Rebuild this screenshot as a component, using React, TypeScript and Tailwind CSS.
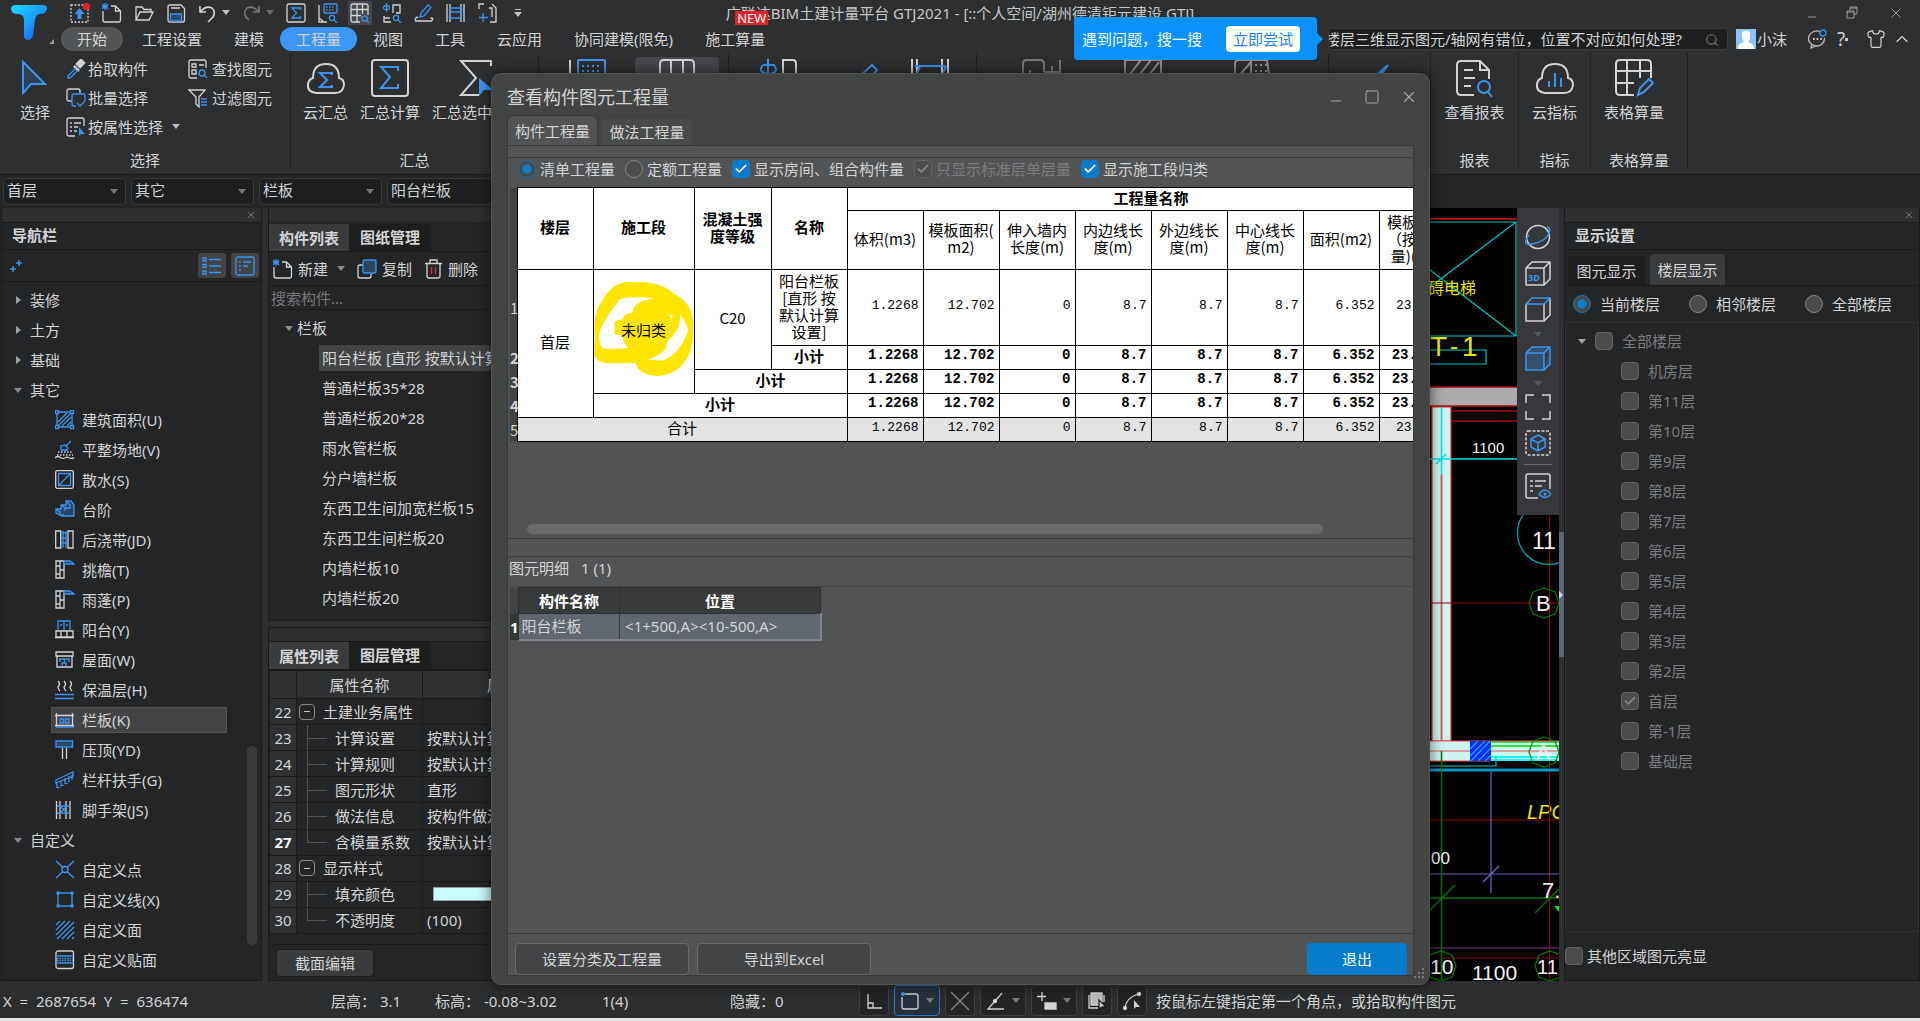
import {ReactNode} from "react";
import {Check, ChevronUp, Minus, Search, Shirt, Square, X} from "lucide-react";

const BLUE = "#3d93ee";
const GRAY = "#d2d3d4";

function Icon({children, className = "size-5", box = 20}: {children: ReactNode; className?: string; box?: number}) {
  return (
    <svg viewBox={`0 0 ${box} ${box}`} fill="none" stroke={GRAY} strokeWidth={box > 20 ? 2 : 1.3} className={`shrink-0 ${className}`} aria-hidden="true">
      {children}
    </svg>
  );
}

function Caret({className = "text-[#8b8c8e]"}: {className?: string}) {
  return (
    <svg viewBox="0 0 8 5" className={`h-[5px] w-2 shrink-0 ${className}`} aria-hidden="true">
      <path d="M0 0h8L4 5z" fill="currentColor"/>
    </svg>
  );
}

function SideCaret() {
  return (
    <svg viewBox="0 0 5 8" className="h-2 w-[5px] shrink-0 text-[#a0a1a3]" aria-hidden="true">
      <path d="M0 0v8l5-4z" fill="currentColor"/>
    </svg>
  );
}

/* ---------- icons ---------- */

const quickIcons = {
  upload: (
    <Icon>
      <rect x="1" y="2" width="17" height="17" strokeDasharray="2 1.5"/>
      <path d="M9.500 5l5 6h-3v5h-4v-5h-3z" fill={BLUE} stroke="none"/>
      <circle cx="16.500" cy="3.500" r="3.500" fill="#e5202a" stroke="none"/>
    </Icon>
  ),
  create: (
    <Icon>
      <path d="M1 8v9q0 2 2 2h14q1.500 0 1.500-2V8l-5-5H9M13.500 3v5h5"/>
      <path d="M0 1l6 5M6 1L0 6M3 0v7M0 3.500h6" stroke={BLUE}/>
    </Icon>
  ),
  open: (
    <Icon>
      <path d="M2 17V4h6l2 2.500h7V9M2 17h13l4-8H6z"/>
    </Icon>
  ),
  save: (
    <Icon>
      <path d="M2 4q0-2 2-2h11l3.500 3.500V17q0 2-2 2H4q-2 0-2-2zM5 5h9"/>
      <path d="M4.500 18v-7h11v7z" stroke={BLUE} fill="#2a4a6b"/>
    </Icon>
  ),
  undo: (
    <Icon>
      <path d="M2 3v6h6M2 9Q8 2 14 5q4 4 1 9l-5 5" strokeWidth="1.600"/>
    </Icon>
  ),
  redo: (
    <Icon>
      <path d="M17 3v6h-6M17 9Q11 2 5 5q-4 4-1 9l3 3" stroke="#77787a" strokeWidth="1.600"/>
    </Icon>
  ),
  sum: (
    <Icon>
      <rect x="1" y="1" width="18" height="18" rx="1.500"/>
      <path d="M14.500 7V5H6l4.500 5L6 15h8.500v-2" stroke={BLUE}/>
    </Icon>
  ),
  calc: (
    <Icon>
      <path d="M1 2v17h8M1 15l5 4"/>
      <rect x="6" y="1" width="13" height="9" rx="1" stroke={BLUE}/>
      <path d="M8 4h9M8 7h9" stroke={BLUE} strokeDasharray="1.500 1.500"/>
      <circle cx="14" cy="15" r="2.600" stroke={BLUE}/>
      <path d="M16 17l3 3" stroke={BLUE}/>
    </Icon>
  ),
  grid: (
    <Icon>
      <path d="M10 19H3q-2 0-2-2V3q0-2 2-2h13q2 0 2 2v9M1 6.500h17M1 12.500h10M7 1v18M12.500 1v10"/>
      <circle cx="14.500" cy="15.500" r="2.600" stroke={BLUE}/>
      <path d="M16.500 17.500l2.500 2.500" stroke={BLUE}/>
    </Icon>
  ),
  parts: (
    <Icon>
      <path d="M11 10V2h7v8h-4M2 13v6h7M2 15h6"/>
      <path d="M4.500 0v9M2 3h5q2 3-2.500 4Q0 6 2 3" stroke={BLUE}/>
      <circle cx="14" cy="15" r="2.600" stroke={BLUE}/>
      <path d="M16 17l3 3" stroke={BLUE}/>
    </Icon>
  ),
  pen: (
    <Icon>
      <path d="M4 14q-4 1-2.500 4h16q3-3-1-3"/>
      <path d="M6 14l1-4 7-8 3 2.500-7 8.500z" stroke={BLUE}/>
    </Icon>
  ),
  rebar: (
    <Icon>
      <path d="M1 1v18M4 1v18M15 1v18M18 1v18"/>
      <path d="M3 5h13M3 15h13M5 5l-2 10M16 5l-2 10M4 9h12" stroke={BLUE}/>
    </Icon>
  ),
  expand: (
    <Icon>
      <path d="M1 6V1h5M14 1l4 4v14h-6M11 5h3v9"/>
      <path d="M5 10v9M1 14.500h9" stroke={BLUE}/>
    </Icon>
  ),
};

const navIcons: Record<string, ReactNode> = {
  area: (
    <Icon>
      <path d="M2 2h15v15H2zM3 12L12 3M3 16L16 3M7 16l9-9M12 16l4-4" stroke={BLUE}/>
      <path d="M.5.500h3v3h-3zM15.500.500h3v3h-3zM.5 15.500h3v3h-3zM15.500 15.500h3v3h-3z" fill="#242527" stroke={BLUE}/>
    </Icon>
  ),
  ground: (
    <Icon>
      <path d="M6 5v5h7M7 6l3-1 3 3-2 3M11 6l5-5" stroke={BLUE}/>
      <path d="M3 12h14M2 15h16" strokeDasharray="1.500 1.500"/>
      <path d="M0 18q3-3 6 0 3 1 6-1 3 2 7 1"/>
    </Icon>
  ),
  apron: (
    <Icon>
      <rect x=".7" y=".7" width="17.600" height="17.600" rx="1.500"/>
      <path d="M3.500 3.500h12v12h-12zM3.500 15.500l12-12" stroke={BLUE}/>
    </Icon>
  ),
  stairs: (
    <Icon>
      <path d="M1 9h5V5h5V1h5l3 4v11H7l-6-3z" fill="#274766" stroke={BLUE}/>
      <path d="M1 9l4 3v3h4M6 5l4 3v3M11 1l4 4v3h-5" stroke={BLUE}/>
    </Icon>
  ),
  strip: (
    <Icon>
      <path d="M.7 1h5v17h-5zM13 1h5v17h-5z"/>
      <path d="M6 3h7M6 8h7M6 13h7M8 1v17M11 1v17" stroke={BLUE}/>
    </Icon>
  ),
  eave: (
    <Icon>
      <path d="M1 1h8v17H1zM5 1v17M1 6h4M5 10h4M1 14h4"/>
      <path d="M9 1h6l4 3H9z" fill="#274766" stroke={BLUE}/>
    </Icon>
  ),
  balcony: (
    <Icon>
      <path d="M3 10V1h12v9M9 1v9M5 6l2-2M11 6l2-2" stroke={BLUE}/>
      <path d="M1 11h17v6H1zM6 11v6M12 11v6M0 17.500h19"/>
    </Icon>
  ),
  roof: (
    <Icon>
      <path d="M1 2h17v4H1zM2 6v11h15V6"/>
      <path d="M4 9h11M5 9v3M9.500 9v3M14 9v3M7 16v-3h4v3" stroke={BLUE}/>
    </Icon>
  ),
  heat: (
    <Icon>
      <path d="M3 1q3 3 0 6 0 2 2 4M9 1q3 3 0 6 0 2 2 4M15 1q3 3 0 6 0 2 2 4"/>
      <path d="M0 14.500h19M0 18.500h19" stroke={BLUE}/>
    </Icon>
  ),
  parapet: (
    <Icon>
      <path d="M1.500 3v14M17.500 3v14M0 5.500h19M0 15.500h19"/>
      <path d="M5 9h3.500v4H5zM10.500 9H14v4h-3.500zM1 17h18" stroke={BLUE}/>
    </Icon>
  ),
  coping: (
    <Icon>
      <path d="M7.500 8v11M11.500 8v11"/>
      <path d="M1 1h16.500v6H1z" fill="#274766" stroke={BLUE}/>
    </Icon>
  ),
  rail: (
    <Icon>
      <path d="M1 10l17-8v4L1 13zM2 12v6M6 10v6M10 8v6M14 6v6M17 5v5M2 18l3-1M6 16l3-1M10 14l3-1" stroke={BLUE}/>
    </Icon>
  ),
  scaffold: (
    <Icon>
      <path d="M1.500 1v18M5 1v18M11 1v18M15 1v18"/>
      <path d="M2 6h13M2 13h13M5 13l7-7M5 6l7 7" stroke={BLUE}/>
    </Icon>
  ),
  point: (
    <Icon>
      <circle cx="10" cy="9.500" r="3" stroke={BLUE}/>
      <path d="M1 1l7 6.500M19 1l-7 6.500M1 18l7-6.500M19 18l-7-6.500" stroke={BLUE}/>
    </Icon>
  ),
  line: (
    <Icon>
      <path d="M3 3h14v13H3z" stroke={BLUE}/>
      <path d="M1.500 1.500h3v3h-3zM15.500 1.500h3v3h-3zM1.500 14.500h3v3h-3zM15.500 14.500h3v3h-3z" fill={BLUE} stroke="none"/>
    </Icon>
  ),
  face: (
    <Icon>
      <path d="M1 5l4-4M1 10l9-9M1 15L15 1M2 19L19 2M7 19L19 7M12 19l7-7M17 19l2-2" stroke={BLUE}/>
    </Icon>
  ),
  veneer: (
    <Icon>
      <rect x="1" y="1" width="17.500" height="17.500" rx="2"/>
      <path d="M1 6h17.500M1 13h17.500" stroke={BLUE}/>
      <path d="M2 8.500h16M2 10.500h16" stroke={BLUE} strokeDasharray="1.500 1"/>
    </Icon>
  ),
};

/* ---------- data ---------- */

const menuTabs = ["工程设置", "建模", "工程量", "视图", "工具", "云应用", "协同建模(限免)", "施工算量"];

const navOther = [
  {icon: "area", name: "建筑面积(U)"},
  {icon: "ground", name: "平整场地(V)"},
  {icon: "apron", name: "散水(S)"},
  {icon: "stairs", name: "台阶"},
  {icon: "strip", name: "后浇带(JD)"},
  {icon: "eave", name: "挑檐(T)"},
  {icon: "eave", name: "雨蓬(P)"},
  {icon: "balcony", name: "阳台(Y)"},
  {icon: "roof", name: "屋面(W)"},
  {icon: "heat", name: "保温层(H)"},
  {icon: "parapet", name: "栏板(K)", selected: true},
  {icon: "coping", name: "压顶(YD)"},
  {icon: "rail", name: "栏杆扶手(G)"},
  {icon: "scaffold", name: "脚手架(JS)"},
];

const navCustom = [
  {icon: "point", name: "自定义点"},
  {icon: "line", name: "自定义线(X)"},
  {icon: "face", name: "自定义面"},
  {icon: "veneer", name: "自定义贴面"},
];

const components = [
  "阳台栏板 [直形 按默认计算设置]",
  "普通栏板35*28",
  "普通栏板20*28",
  "雨水管栏板",
  "分户墙栏板",
  "东西卫生间加宽栏板15",
  "东西卫生间栏板20",
  "内墙栏板10",
  "内墙栏板20",
];

const properties = [
  {no: 22, name: "土建业务属性", group: true},
  {no: 23, name: "计算设置", value: "按默认计算设置"},
  {no: 24, name: "计算规则", value: "按默认计算规则"},
  {no: 25, name: "图元形状", value: "直形"},
  {no: 26, name: "做法信息", value: "按构件做法"},
  {no: 27, name: "含模量系数", value: "按默认计算规则", bold: true, last: true},
  {no: 28, name: "显示样式", group: true},
  {no: 29, name: "填充颜色", swatch: true},
  {no: 30, name: "不透明度", value: "(100)", last: true},
];

const floors = ["机房层", "第11层", "第10层", "第9层", "第8层", "第7层", "第6层", "第5层", "第4层", "第3层", "第2层", "首层", "第-1层", "基础层"];

const quantityHeads = ["体积(m3)", "模板面积(\nm2)", "伸入墙内\n长度(m)", "内边线长\n度(m)", "外边线长\n度(m)", "中心线长\n度(m)", "面积(m2)", "模板面积\n（按含模\n量)(m2)"];
const quantities = ["1.2268", "12.702", "0", "8.7", "8.7", "8.7", "6.352", "23.9512"];

/* ---------- form controls ---------- */

function CheckBox({label, checked, disabled, gap = "gap-1", tone = "dark"}: {label: string; checked?: boolean; disabled?: boolean; gap?: string; tone?: "dark" | "blue"}) {
  return (
    <label className={`flex items-center ${gap} ${disabled ? "text-[#7b7c7e]" : ""}`}>
      <span className="relative size-[18px]">
        <input
          type="checkbox"
          defaultChecked={checked}
          disabled={disabled}
          className={`block size-[18px] appearance-none rounded-sm border ${tone === "blue" ? "border-[#0a7acb] bg-[#0a7acb]" : "border-[#626365] bg-[#4b4c4e]"}`}
        />
        {checked && <Check strokeWidth={3} className={`pointer-events-none absolute inset-0.5 size-3.5 ${disabled ? "text-[#85868a]" : "text-white"}`}/>}
      </span>
      {label}
    </label>
  );
}

function Radio({label, name, checked, gap = "gap-1"}: {label: string; name: string; checked?: boolean; gap?: string}) {
  return (
    <label className={`flex items-center ${gap}`}>
      <input
        type="radio"
        name={name}
        defaultChecked={checked}
        className="size-[18px] appearance-none rounded-full border border-[#858688] bg-[#4b4c4e] checked:border-[#1b72b3] checked:bg-[radial-gradient(circle,#0a7fd2_0_4px,#48494b_5px)]"
      />
      {label}
    </label>
  );
}

/* ---------- header ---------- */

function TitleBar() {
  return (
    <div className="grid h-[25px] grid-cols-[1fr_auto_1fr] items-center">
      <div className="flex items-center gap-3 pl-[70px]">
        <button aria-label="上传">{quickIcons.upload}</button>
        <button aria-label="新建工程">{quickIcons.create}</button>
        <button aria-label="打开">{quickIcons.open}</button>
        <button aria-label="保存">{quickIcons.save}</button>
        <button aria-label="撤销" className="flex items-center gap-1">{quickIcons.undo}<Caret className="text-[#c0c1c2]"/></button>
        <button aria-label="恢复" className="flex items-center gap-1">{quickIcons.redo}<Caret className="text-[#6c6d6f]"/></button>
        <button aria-label="汇总计算">{quickIcons.sum}</button>
        <button aria-label="查看计算式">{quickIcons.calc}</button>
        <button aria-label="查看工程量" className="bg-[#46474a] ring-2 ring-[#46474a]">{quickIcons.grid}</button>
        <button aria-label="查看构件">{quickIcons.parts}</button>
        <button aria-label="编辑">{quickIcons.pen}</button>
        <button aria-label="钢筋">{quickIcons.rebar}</button>
        <button aria-label="扩展">{quickIcons.expand}</button>
        <button aria-label="更多" className="ml-1 flex flex-col items-center gap-0.5 text-[#c0c1c2]">
          <span className="h-px w-1.5 bg-current"/>
          <Caret className="text-[#c0c1c2]"/>
        </button>
      </div>
      <h1 className="text-[#c6c7c8]">广联达BIM土建计量平台 GTJ2021 - [::个人空间/湖州德清钜元建设.GTJ]</h1>
      <div className="flex items-center justify-end gap-7 pr-4 text-[#9a9b9d]">
        <button aria-label="最小化"><Minus className="mt-2 size-3"/></button>
        <button aria-label="还原">
          <svg viewBox="0 0 14 14" className="size-3.5" fill="none" stroke="currentColor"><path d="M4 4V1h7v7H8M1 5h7v7H1zM1 6h7M4 2h7"/></svg>
        </button>
        <button aria-label="关闭"><X className="size-4" strokeWidth={1.5}/></button>
      </div>
    </div>
  );
}

function MenuBar() {
  return (
    <div className="flex h-7 items-center pl-[61px]">
      <nav className="flex items-center">
        <button className="mr-[3px] h-6 rounded-full bg-[#535456] px-4">开始</button>
        {menuTabs.map((tab) => (
          <button key={tab} className={`relative h-6 px-4 ${tab === "工程量" ? "rounded-full bg-[#3c97f6]" : ""}`}>
            {tab}
            {tab === "施工算量" && (
              <span className="absolute -top-4 left-[46px] bg-[#e02128] px-0.5 text-[13px] leading-[14px] text-white">NEW</span>
            )}
          </button>
        ))}
      </nav>
      <div className="ml-auto flex items-center pr-2">
        <div className="relative h-[22px] w-[400px] rounded-sm border border-[#3a3b3d] bg-[#1d1e1f]">
          <input aria-label="搜索" defaultValue="楼层三维显示图元/轴网有错位，位置不对应如何处理?" className="block h-5 w-[370px] bg-transparent -indent-1 outline-none"/>
          <Search className="absolute top-1 right-2 size-3.5 text-[#6f7072]"/>
          <div className="absolute -top-3 right-full z-30 mr-3 flex h-[43px] w-[243px] items-center justify-between rounded bg-[#0b92ff] pr-[17px] pl-2 text-white">
            遇到问题，搜一搜
            <button className="h-[26px] rounded-sm bg-white px-[7px] text-[#1a7fe8]">立即尝试</button>
            <span className="absolute top-4 -right-1.5 border-y-[6px] border-l-[6px] border-y-transparent border-l-[#0b92ff]"/>
          </div>
        </div>
        <svg viewBox="0 0 20 20" className="ml-2 size-5 bg-[#8cc4f8]" aria-hidden="true">
          <path d="M6 3q4-3 8 0v6q-1 3-2 4 5 1 6 5v2H2v-2q1-4 6-5-1-1-2-4z" fill="#fff"/>
        </svg>
        <span className="ml-px">小沫</span>
        <button aria-label="消息" className="ml-5">
          <Icon>
            <path d="M17.500 9a8 7.500 0 1 1-4-6M5 15l-1 4 5-2" stroke="#bcbdbf"/>
            <path d="M6 10h9" strokeDasharray="1.600 2" strokeWidth="2"/>
            <circle cx="16" cy="4" r="3" stroke={BLUE}/>
          </Icon>
        </button>
        <button aria-label="帮助" className="ml-2.5 flex w-[18px] items-center text-[19px] leading-5">?<span className="size-[3px] bg-[#c6c7c8]"/></button>
        <button aria-label="皮肤" className="ml-[11px]"><Shirt className="size-5" strokeWidth={1.4}/></button>
        <button aria-label="收起" className="ml-1.5"><ChevronUp className="size-5" strokeWidth={1.4}/></button>
      </div>
    </div>
  );
}

function RibbonGroup({label, className, children}: {label?: string; className: string; children?: ReactNode}) {
  return (
    <div className={`flex h-[115px] flex-col border-r border-[#1f2022] ${className}`}>
      <div className="flex h-24 shrink-0">{children}</div>
      <div className="flex h-[22px] shrink-0 items-center justify-center">{label}</div>
    </div>
  );
}

function BigButton({label, className = "", children}: {label: string; className?: string; children: ReactNode}) {
  return (
    <button className={`flex flex-col items-center gap-1 pt-[5px] whitespace-nowrap ${className}`}>
      <Icon box={40} className="size-10">{children}</Icon>
      {label}
    </button>
  );
}

function SmallButton({label, gap = "gap-0.5", children}: {label: string; gap?: string; children: ReactNode}) {
  return (
    <button className={`flex h-[29px] items-center whitespace-nowrap ${gap}`}>
      {children}
      {label}
    </button>
  );
}

function ToolIcon({label, className, children}: {label: string; className: string; children: ReactNode}) {
  return (
    <button aria-label={label} className={`flex justify-center pt-[5px] ${className}`}>
      <Icon box={40} className="size-10">{children}</Icon>
    </button>
  );
}

function Ribbon() {
  return (
    <div className="flex h-[121px] items-start">
      <RibbonGroup label="选择" className="w-[291px]">
        <BigButton label="选择" className="w-[70px]">
          <path d="M8 4v31l8-9h14z" stroke={BLUE} fill="#2c4156"/>
        </BigButton>
        <div className="-ml-1 w-[124px] pt-px">
          <SmallButton label="拾取构件">
            <Icon>
              <path d="M8 7l5 5M11 5l4-4 3 3-4 4z" fill={GRAY} strokeWidth="2.500"/>
              <path d="M10 9l-8 8v2h2l8-8" stroke={BLUE}/>
            </Icon>
          </SmallButton>
          <SmallButton label="批量选择">
            <Icon>
              <path d="M6 13H3q-2 0-2-2V3q0-2 2-2h9q2 0 2 2v2"/>
              <path d="M10 18H8q-2 0-2-2V8q0-2 2-2h9q2 0 2 2v5M11 15l3 3 5-5" stroke={BLUE}/>
            </Icon>
          </SmallButton>
          <SmallButton label="按属性选择">
            <Icon>
              <path d="M9 19H3q-2 0-2-2V3q0-2 2-2h13q2 0 2 2v6M4 6h2M8 6h7M4 10h2M8 10h4M4 14h2M8 14h3"/>
              <path d="M13 10v9l2-2h4z" fill={BLUE} stroke="none"/>
            </Icon>
          </SmallButton>
        </div>
        <div className="-ml-0.5 pt-px">
          <SmallButton label="查找图元" gap="gap-1">
            <Icon>
              <path d="M9 19H3q-2 0-2-2V3q0-2 2-2h13q2 0 2 2v6M4 5h4v3H4zM4 11h4v4H4zM11 6h5"/>
              <circle cx="14" cy="14" r="3" stroke={BLUE}/>
              <path d="M16 16l3 3" stroke={BLUE}/>
            </Icon>
          </SmallButton>
          <SmallButton label="过滤图元" gap="gap-1">
            <Icon>
              <path d="M1 2h16l-6 7v10l-3-3V9z"/>
              <path d="M13 11h6M13 14h6M13 17h6" stroke={BLUE}/>
            </Icon>
          </SmallButton>
          <div className="-ml-4 flex h-[29px] items-center"><Caret className="text-[#c0c1c2]"/></div>
        </div>
      </RibbonGroup>
      <RibbonGroup label="汇总" className="w-[248px]">
        <BigButton label="云汇总" className="ml-3">
          <path d="M10 35q-9-1-8-9 1-5 5-6 0-14 13-14t13 14q5 1 5 7-1 8-9 8z"/>
          <path d="M26 17v-2H14l7 7-7 7h12v-2" stroke={BLUE}/>
        </BigButton>
        <BigButton label="汇总计算" className="ml-3">
          <rect x="2" y="2" width="36" height="36" rx="3"/>
          <path d="M28 13V9H11l9 10-9 11h17v-4" stroke={BLUE}/>
        </BigButton>
        <BigButton label="汇总选中图元" className="ml-3">
          <path d="M34 8V3H4l15 17L4 37h18"/>
          <path d="M22 20v18l5-6h9z" fill={BLUE} stroke="none"/>
        </BigButton>
      </RibbonGroup>
      <RibbonGroup className="w-[190px]">
        <ToolIcon label="查看计算式" className="w-24">
          <path d="M3 2v36h20"/>
          <rect x="11" y="2" width="27" height="20" rx="1" stroke={BLUE}/>
          <path d="M15 8h20M15 13h20" stroke={BLUE} strokeDasharray="2 3"/>
        </ToolIcon>
        <ToolIcon label="查看工程量" className="mt-1 w-[84px] rounded bg-[#45474a] pt-px">
          <path d="M3 38V6q0-4 4-4h26q4 0 4 4v20M3 17h34M14 2v36M26 2v24"/>
        </ToolIcon>
      </RibbonGroup>
      <RibbonGroup className="w-[248px]">
        <ToolIcon label="查看构件" className="w-[100px]">
          <path d="M24 30V2h10q3 0 3 4v24z"/>
          <path d="M9 1v30M4 7h11q6 8-6 9Q-2 14 4 7" stroke={BLUE}/>
        </ToolIcon>
        <ToolIcon label="编辑构件" className="w-[74px]">
          <path d="M12 24l2-6L26 7l5 5-11 13" stroke={BLUE}/>
        </ToolIcon>
        <ToolIcon label="查看钢筋" className="w-[54px]">
          <path d="M2 1v38M7 1v38M32 1v38M38 1v38"/>
          <path d="M5 8h30M10 8L5 20M36 8l-5 12" stroke={BLUE}/>
        </ToolIcon>
      </RibbonGroup>
      <RibbonGroup className="w-[352px]">
        <ToolIcon label="钢筋三维" className="w-[130px]">
          <path d="M1 30V6q0-4 4-4h13q4 0 4 4v8M8 20v-8M22 14h16M38 2v18M30 8v12" stroke="#77787a"/>
        </ToolIcon>
        <ToolIcon label="过滤" className="w-[72px]">
          <path d="M2 30V2h36v28M4 20L18 2M14 20L28 2M24 20L36 4" stroke="#8d8e90"/>
        </ToolIcon>
        <ToolIcon label="分类" className="w-[148px]">
          <path d="M2 30V6q0-4 4-4h28l4 28M4 20L18 4M18 2v20" stroke="#8d8e90"/>
          <path d="M22 7h12M22 13h12" stroke="#8d8e90" strokeDasharray="2 3"/>
        </ToolIcon>
      </RibbonGroup>
      <RibbonGroup className="w-[102px]">
        <ToolIcon label="检查" className="w-[118px]">
          <path d="M8 24L28 7 18 22z" stroke={BLUE} fill={BLUE}/>
        </ToolIcon>
      </RibbonGroup>
      <RibbonGroup label="报表" className="w-[88px]">
        <BigButton label="查看报表" className="w-[87px]">
          <path d="M19 37H6q-4 0-4-4V7q0-4 4-4h19l9 9v9M25 3v9h9M9 12h9M9 20h11M9 28h7"/>
          <circle cx="29" cy="29" r="6" stroke={BLUE}/>
          <path d="M33 34l4 5" stroke={BLUE}/>
        </BigButton>
      </RibbonGroup>
      <RibbonGroup label="指标" className="w-[72px]">
        <BigButton label="云指标" className="w-[71px]">
          <path d="M10 35q-9-1-8-9 1-5 5-6 0-14 13-14t13 14q5 1 5 7-1 8-9 8z"/>
          <path d="M14 29v-6M20 29V15M26 29v-9" stroke={BLUE}/>
        </BigButton>
      </RibbonGroup>
      <RibbonGroup label="表格算量" className="w-[97px]">
        <BigButton label="表格算量" className="w-[86px]">
          <path d="M20 37H6q-4 0-4-4V6q0-4 4-4h27q4 0 4 4v14M2 13h35M2 25h18M13 2v35M26 2v18"/>
          <path d="M24 37l2-7 9-9 4 4-9 9z" stroke={BLUE}/>
        </BigButton>
      </RibbonGroup>
    </div>
  );
}

function FilterBar() {
  return (
    <div className="flex h-[34px] items-center gap-[5px] border-t border-[#1b1c1d] bg-[#242527] pl-[3px]">
      {["首层", "其它", "栏板", "阳台栏板"].map((item) => (
        <div key={item} className="relative w-[123px]">
          <select aria-label={item} className="block h-[27px] w-full appearance-none rounded-sm border border-[#37383a] bg-[#1e1f20] pb-[3px] pl-[3px]">
            <option>{item}</option>
          </select>
          <span className="pointer-events-none absolute top-[11px] right-2 flex"><Caret className="text-[#77787a]"/></span>
        </div>
      ))}
    </div>
  );
}

/* ---------- left panels ---------- */

function PanelStrip() {
  return (
    <div className="flex h-3.5 shrink-0 items-center justify-end bg-[#2d2e30] pr-1">
      <button aria-label="关闭面板"><X className="size-3 text-[#8b8c8e]" strokeWidth={1.5}/></button>
    </div>
  );
}

function NavGroup({name, open}: {name: string; open?: boolean}) {
  return (
    <button className="flex h-[30px] items-center">
      <span className="flex w-7 justify-center pl-1">{open ? <Caret/> : <SideCaret/>}</span>
      {name}
    </button>
  );
}

function NavItem({icon, name, selected}: {icon: string; name: string; selected?: boolean}) {
  return (
    <button className={`my-0.5 ml-[49px] flex h-[26px] w-44 items-center gap-[7px] pl-[3px] ${selected ? "border border-[#505153] bg-[#434446]" : "border border-transparent"}`}>
      {navIcons[icon]}
      {name}
    </button>
  );
}

function NavPanel() {
  return (
    <aside className="ml-px flex w-[261px] shrink-0 flex-col border border-t-0 border-[#191a1b]">
      <PanelStrip/>
      <h2 className="flex h-7 shrink-0 items-center border-y border-[#191a1b] pb-0.5 pl-2.5 font-bold">导航栏</h2>
      <div className="flex h-8 shrink-0 items-center gap-[5px] border-b border-[#191a1b] pr-0.5 pl-2">
        <svg viewBox="0 0 12 14" className="mr-auto h-3.5 w-3" fill="none" stroke={BLUE} strokeWidth="1.500" aria-hidden="true"><path d="M9 1v6M6 4h6M3 7v6M0 10h6"/></svg>
        <button aria-label="列表视图" className="flex h-[25px] w-7 items-center justify-center rounded bg-[#434446]">
          <Icon><path d="M7 3.500h12M7 10h12M7 16.500h12M1 2h3v3H1zM1 8.500h3v3H1zM1 15h3v3H1z" stroke={BLUE}/></Icon>
        </button>
        <button aria-label="分组视图" className="flex h-[25px] w-7 items-center justify-center rounded bg-[#434446]">
          <Icon><rect x="1" y="1" width="18" height="18" rx="2" stroke={BLUE}/><path d="M4 6h2M8 6h8M4 10h2M8 10h5M4 14h2" stroke={BLUE}/></Icon>
        </button>
      </div>
      <div className="relative flex grow flex-col pt-[3px]">
        <NavGroup name="装修"/>
        <NavGroup name="土方"/>
        <NavGroup name="基础"/>
        <NavGroup name="其它" open/>
        {navOther.map((item) => <NavItem key={item.name} {...item}/>)}
        <NavGroup name="自定义" open/>
        {navCustom.map((item) => <NavItem key={item.name} {...item}/>)}
        <div className="absolute right-1 bottom-[35px] h-[199px] w-2.5 rounded-full bg-[#3b3c3e]"/>
      </div>
    </aside>
  );
}

function PanelTabs({tabs}: {tabs: string[]}) {
  return (
    <div className="flex h-7 shrink-0 border-b border-[#191a1b] font-bold">
      <button className="w-20 bg-[#3a3b3d]">{tabs[0]}</button>
      <button className="w-[82px] bg-[#1e1e1f] pb-0.5">{tabs[1]}</button>
    </div>
  );
}

function PropertyTable() {
  return (
    <table className="h-[264px] w-full table-fixed border-collapse text-left whitespace-nowrap">
      <thead className="bg-[#2f3032]">
        <tr className="h-7">
          <th className="w-[27px] border border-[#191a1b]"/>
          <th className="w-[126px] border border-[#191a1b] p-0 text-center font-normal">属性名称</th>
          <th className="border border-[#191a1b] p-0 text-center font-normal">属性值</th>
        </tr>
      </thead>
      <tbody>
        {properties.map((row) => (
          <tr key={row.no} className="h-[26px]">
            <td className={`border border-[#191a1b] bg-[#2f3032] p-0 text-center ${row.bold ? "font-bold text-white" : ""}`}>{row.no}</td>
            <td className="relative border border-[#191a1b] p-0">
              {row.group ? (
                <span className="flex items-center gap-2 pl-0.5">
                  <span className="flex size-4 items-center justify-center rounded-sm border border-[#8b8c8e]">
                    <span className="h-px w-1.5 bg-[#c6c7c8]"/>
                  </span>
                  {row.name}
                </span>
              ) : (
                <>
                  <span className={`absolute top-0 left-2.5 border-l border-[#4f5052] ${row.last ? "h-1/2" : "h-full"}`}/>
                  <span className="absolute top-1/2 left-2.5 w-5 border-t border-[#4f5052]"/>
                  <span className="pl-[38px]">{row.name}</span>
                </>
              )}
            </td>
            <td className="border border-[#191a1b] p-0 pl-1">
              {row.swatch ? <span className="ml-1.5 block h-3.5 w-28 border border-[#9a9b9d] bg-[#c8fbfa]"/> : row.value}
            </td>
          </tr>
        ))}
      </tbody>
    </table>
  );
}

function ComponentPanel() {
  return (
    <aside className="flex w-[330px] shrink-0 flex-col">
      <section className="flex h-[413px] shrink-0 flex-col overflow-hidden border border-t-0 border-[#191a1b] bg-[#242527]">
        <PanelStrip/>
        <div className="h-0.5"/>
        <PanelTabs tabs={["构件列表", "图纸管理"]}/>
        <div className="flex h-[34px] shrink-0 items-center border-b border-[#191a1b] pl-1 whitespace-nowrap">
          <button className="flex items-center gap-[5px]">{quickIcons.create}新建<span className="ml-1"><Caret/></span></button>
          <button className="ml-3 flex items-center gap-[5px]">
            <Icon>
              <path d="M6 6H3Q1 6 1 8v9q0 2 2 2h9q2 0 2-2v-2"/>
              <rect x="6" y="1" width="13" height="13" rx="1.500" stroke={BLUE} fill="#2c4660"/>
            </Icon>
            复制
          </button>
          <button className="ml-3 flex items-center gap-1">
            <Icon>
              <path d="M1 4.500h17M6 4V1h7v3M3 5v12q0 2 2 2h9q2 0 2-2V5"/>
              <path d="M7.500 8v7M11.500 8v7" stroke="#d0383e"/>
            </Icon>
            删除
          </button>
        </div>
        <input aria-label="搜索构件" placeholder="搜索构件..." className="h-6 shrink-0 border-b border-[#191a1b] px-0.5 outline-none placeholder:text-[#77787a]"/>
        <div className="flex flex-col pt-[3px]">
          <button className="flex h-[30px] items-center gap-1 pl-4"><Caret/>栏板</button>
          {components.map((name, i) => (
            <button key={name} className={`my-0.5 ml-[50px] h-[26px] pl-[3px] text-left whitespace-nowrap ${i === 0 ? "bg-[#434446]" : ""}`}>{name}</button>
          ))}
        </div>
      </section>
      <section className="mt-1.5 flex grow flex-col border border-[#191a1b] bg-[#242527]">
        <div className="h-3.5 shrink-0 border-b border-[#191a1b] bg-[#2d2e30]"/>
        <PanelTabs tabs={["属性列表", "图层管理"]}/>
        <PropertyTable/>
        <div className="mt-2.5 flex grow items-center border-t border-[#191a1b] pl-[7px]">
          <button className="h-7 w-[98px] rounded border border-[#1a1b1c] bg-[#3a3b3d]">截面编辑</button>
        </div>
      </section>
    </aside>
  );
}

/* ---------- drawing area ---------- */

function Drawing() {
  return (
    <svg viewBox="0 0 129 773" className="h-[773px] w-[129px] shrink-0" fill="none" strokeWidth="1.200" fontFamily="Liberation Sans, Noto Sans CJK SC, sans-serif">
      <path d="M0 11h88" stroke="#a80d0d" strokeWidth="2"/>
      <path d="M0 14h86v114H0M0 62l86 66M86 14L0 79M0 142h56v14H0" stroke="#00c8c8"/>
      <g fill="#e8e800">
        <text x="-18" y="86" fontSize="16">障碍电梯</text>
        <text x="0" y="148" fontSize="28">T</text>
        <text x="20" y="146" fontSize="24">-</text>
        <text x="32" y="148" fontSize="28">1</text>
        <text x="97" y="611" fontSize="20" fontStyle="italic">LPC</text>
      </g>
      <path d="M0 179h88v19H0z" fill="#ababab"/>
      <path d="M0 179h88M0 198h88M21 203h108M21 213h108" stroke="#a80d0d" strokeWidth="1.500"/>
      <path d="M2 199h19v334H2z" fill="#cdf3f1" stroke="#e03030"/>
      <path d="M11.500 267v276" stroke="#d86060" strokeWidth="2"/>
      <path d="M11.500 199v68M0 251h129M6 256l10-10" stroke="#00e0e0" strokeWidth="1.500"/>
      <path d="M1 395h128M119.500 307v466M0 612h129M13 750h116" stroke="#8a0a0a"/>
      <circle cx="119" cy="325" r="31.500" stroke="#00b4b4"/>
      <path d="M0 533h40v20H0z" fill="#cdf3f1"/>
      <path d="M61 533h68v20H61z" fill="#c8fbf4"/>
      <path d="M61 534h68M61 538h68" stroke="#30e040" strokeWidth="2"/>
      <path d="M61 549h68M61 552h68" stroke="#20f0f0" strokeWidth="2"/>
      <path d="M0 533h129M0 543h129M0 553h61" stroke="#e05050"/>
      <path d="M40 533h21v20H40z" fill="#0026ff"/>
      <path d="M40 541l8-8M40 548l15-15M41 553l19-20M48 553l13-13M55 553l6-6" stroke="#16b4f0"/>
      <path d="M0 558h66v-9" stroke="#00c8c8"/>
      <path d="M0 562h129" stroke="#0a96c8" strokeWidth="3"/>
      <path d="M61 563v122M0 666h129M53 674l16-16" stroke="#6a66c8"/>
      <path d="M0 740h129" stroke="#803c88"/>
      <path d="M11.500 543v230M0 690h129M0 702l25-25M105 705l24-24" stroke="#087008" strokeWidth="1.500"/>
      <path d="M124 698h5v6z" fill="#10e010"/>
      <g stroke="#0a7a0a">
        <path d="M103 384l11-4 11 4 4 11-4 11-11 4-11-4-4-11z"/>
        <path d="M103 533l11-4 11 4 4 11-4 11-11 4-11-4-4-11z"/>
        <path d="M0 747l11-4 11 4 4 11-4 11-11 4-11-4"/>
        <path d="M109 747l11-4 11 4M131 769l-11 4-11-4-4-11 4-11"/>
      </g>
      <g fill="#f2f2f2">
        <text x="42" y="245" fontSize="15">1100</text>
        <text x="102" y="341" fontSize="23">11</text>
        <text x="106" y="403" fontSize="22">B</text>
        <text x="106" y="552" fontSize="22">A</text>
        <text x="1" y="656" fontSize="17">00</text>
        <text x="112" y="690" fontSize="22">7.</text>
        <text x="0" y="766" fontSize="21">10</text>
        <text x="107" y="766" fontSize="20">11</text>
        <text x="42" y="772" fontSize="21">1100</text>
      </g>
    </svg>
  );
}

function ViewTools() {
  return (
    <div className="absolute top-0 right-0 flex h-[307px] w-[42px] flex-col items-center bg-[#37383b] pt-4">
      <button aria-label="动态观察">
        <Icon box={26} className="size-[26px]"><circle cx="13" cy="13" r="11.500" strokeWidth="1.500"/><path d="M22 3q5 1 1 8T7 20q-8 2-6-4 1-3 3-5" stroke={BLUE} strokeWidth="1.500"/></Icon>
      </button>
      <button aria-label="三维" className="mt-2.5">
        <Icon box={26} className="size-[26px]">
          <path d="M1 8h18v17H1zM1 8l6-6h18l-6 6M25 2v17l-6 6" strokeWidth="1.500" strokeLinejoin="round"/>
          <text x="3" y="21" fontSize="9" fontWeight="bold" fill={BLUE} stroke="none">3D</text>
        </Icon>
      </button>
      <button aria-label="俯视" className="mt-2.5">
        <Icon box={26} className="size-[26px]"><path d="M1 8v17h18V8M25 2v17l-6 6" strokeWidth="1.500"/><path d="M1 8l6-6h18l-6 6z" stroke={BLUE} strokeWidth="1.500"/></Icon>
      </button>
      <Caret className="mt-2.5 text-[#55586a]"/>
      <button aria-label="实体" className="mt-2">
        <Icon box={26} className="size-[26px]"><path d="M1 8h18v17H1zM1 8l6-6h18l-6 6M25 2v17l-6 6" fill="#34506e" stroke={BLUE} strokeWidth="1.500" strokeLinejoin="round"/></Icon>
      </button>
      <Caret className="mt-2.5 text-[#55586a]"/>
      <button aria-label="全屏" className="mt-2">
        <Icon box={26} className="size-[26px]"><path d="M1 9V1h8M17 1h8v8M25 17v8h-8M9 25H1v-8" strokeWidth="1.500"/></Icon>
      </button>
      <button aria-label="局部三维" className="mt-2.5">
        <Icon box={26} className="size-[26px]">
          <rect x="1" y="1" width="24" height="24" rx="2" strokeWidth="1.500" strokeDasharray="3 1.500"/>
          <path d="M13 5l7 4v8l-7 4-7-4V9zM6 9l7 4 7-4M13 13v8" stroke={BLUE} strokeWidth="1.500"/>
        </Icon>
      </button>
      <div className="mt-2 h-px w-7 bg-[#6a6b6d]"/>
      <button aria-label="显示设置" className="mt-2">
        <Icon box={26} className="size-[26px]">
          <path d="M13 25H3q-2 0-2-2V3q0-2 2-2h20q2 0 2 2v13M5 8h3M10 8h11M5 13h3M10 13h7M5 18h3" strokeWidth="1.500"/>
          <path d="M14 21q6-8 12 0-6 7-12 0z" stroke={BLUE} strokeWidth="1.500"/>
          <circle cx="20" cy="21" r="1.500" fill={BLUE} stroke="none"/>
        </Icon>
      </button>
    </div>
  );
}

function Canvas() {
  return (
    <div className="relative flex grow justify-end overflow-hidden bg-black">
      <Drawing/>
      <ViewTools/>
    </div>
  );
}

/* ---------- right panel ---------- */

function DisplayPanel() {
  return (
    <aside className="flex w-[356px] shrink-0 flex-col border border-t-0 border-[#191a1b] bg-[#242527]">
      <PanelStrip/>
      <h2 className="flex h-7 shrink-0 items-center border-y border-[#191a1b] pb-0.5 pl-2.5 font-bold">显示设置</h2>
      <div className="flex h-9 shrink-0 items-end gap-[5px] border-b border-[#191a1b] pl-[3px]">
        <button className="h-[29px] w-[77px] rounded-t bg-[#1e1e1f]">图元显示</button>
        <button className="h-[31px] w-[75px] rounded-t bg-[#3a3b3d]">楼层显示</button>
      </div>
      <div className="flex h-9 shrink-0 items-center gap-[29px] pl-2">
        <Radio name="floor" label="当前楼层" gap="gap-[9px]" checked/>
        <Radio name="floor" label="相邻楼层" gap="gap-[9px]"/>
        <Radio name="floor" label="全部楼层" gap="gap-[9px]"/>
      </div>
      <div className="flex grow flex-col border border-[#2f3032] pt-[3px]">
        <div className="flex h-[30px] items-center gap-[9px] pl-3">
          <Caret className="text-[#a0a1a3]"/>
          <CheckBox label="全部楼层" disabled gap="gap-[9px]"/>
        </div>
        {floors.map((floor) => (
          <div key={floor} className="flex h-[30px] items-center pl-[55px]">
            <CheckBox label={floor} disabled checked={floor === "首层"} gap="gap-[9px]"/>
          </div>
        ))}
      </div>
      <div className="flex h-12 shrink-0 items-center">
        <CheckBox label="其他区域图元亮显"/>
      </div>
    </aside>
  );
}

/* ---------- dialog ---------- */

function Scribble() {
  return (
    <svg viewBox="0 0 300 282" className="absolute top-3 left-0 h-[94px] w-[100px]" fillRule="evenodd" fill="#ffe500" aria-hidden="true">
      <path d="M95 0C60 5 40 30 25 55C5 85 0 110 2 150L0 215C5 235 20 243 50 244L125 243C130 265 150 280 190 282C230 282 265 255 275 235C295 205 300 170 298 120C296 90 285 60 245 38C215 15 190 3 150 1ZM180 50C150 44 95 44 78 52C60 75 15 130 15 168C15 188 22 202 45 202L102 198C90 185 86 172 86 160L62 158V118L85 112C92 94 105 94 115 92C118 65 150 50 180 50ZM258 97C270 115 282 135 282 146C272 180 245 222 205 236L162 233C190 222 214 208 216 195C214 175 240 165 252 138C258 120 260 108 258 97ZM226 98H236L234 110L228 106Z"/>
    </svg>
  );
}

function QuantityCells({bold, total}: {bold?: boolean; total?: boolean}) {
  return (
    <>
      {quantities.map((q, i) => (
        <td key={i} className={`border border-black pr-1 pb-1 text-right font-['Liberation_Mono',monospace] ${bold ? "text-[14px] font-bold" : "text-[13px]"} ${total ? "bg-[#e3e3e3]" : "bg-white"}`}>{q}</td>
      ))}
    </>
  );
}

function RowNo({no}: {no?: number}) {
  return <td className="bg-[#424345] p-0 leading-4 text-[#d2d3d4]">{no}</td>;
}

function QuantityTable() {
  const cell = "border border-black p-0 pb-1 bg-white";
  return (
    <table className="w-[945px] table-fixed border-collapse text-center font-['Noto_Sans_CJK_SC',sans-serif] leading-[17px] text-black">
      <colgroup>
        <col className="w-[7px]"/>
        <col className="w-[76px]"/>
        <col className="w-[101px]"/>
        <col className="w-[77px]"/>
        <col className="w-[76px]"/>
        {quantityHeads.map((h) => <col key={h} className="w-[76px]"/>)}
      </colgroup>
      <tbody>
        <tr className="h-[23px] font-bold">
          <RowNo/>
          <th rowSpan={2} className={cell}>楼层</th>
          <th rowSpan={2} className={cell}>施工段</th>
          <th rowSpan={2} className={cell}>混凝土强<br/>度等级</th>
          <th rowSpan={2} className={cell}>名称</th>
          <th colSpan={8} className={cell}>工程量名称</th>
        </tr>
        <tr className="h-[59px]">
          <RowNo/>
          {quantityHeads.map((h) => <th key={h} className={`${cell} font-normal whitespace-pre`}>{h}</th>)}
        </tr>
        <tr className="h-[76px]">
          <RowNo no={1}/>
          <td rowSpan={4} className={cell}>首层</td>
          <td rowSpan={3} className={`relative ${cell}`}>
            <Scribble/>
            <span className="relative">未归类</span>
          </td>
          <td rowSpan={2} className={cell}>C20</td>
          <td className={cell}>阳台栏板<br/>[直形 按<br/>默认计算<br/>设置]</td>
          <QuantityCells/>
        </tr>
        <tr className="h-6 font-bold">
          <RowNo no={2}/>
          <td className={cell}>小计</td>
          <QuantityCells bold/>
        </tr>
        <tr className="h-6 font-bold">
          <RowNo no={3}/>
          <td colSpan={2} className={cell}>小计</td>
          <QuantityCells bold/>
        </tr>
        <tr className="h-6 font-bold">
          <RowNo no={4}/>
          <td colSpan={3} className={cell}>小计</td>
          <QuantityCells bold/>
        </tr>
        <tr className="h-6">
          <RowNo no={5}/>
          <td colSpan={4} className="border border-black bg-[#e3e3e3] p-0 pb-1">合计</td>
          <QuantityCells total/>
        </tr>
      </tbody>
    </table>
  );
}

function DetailTable() {
  return (
    <table className="table-fixed border-collapse text-left whitespace-nowrap">
      <thead>
        <tr className="h-[26px] bg-[#393a3b] text-center font-bold text-white">
          <th className="w-2 bg-[#424345] p-0"/>
          <th className="w-[101px] border border-[#2f3031] p-0">构件名称</th>
          <th className="w-[201px] border border-[#2f3031] p-0">位置</th>
        </tr>
      </thead>
      <tbody>
        <tr className="h-[26px] bg-[#606770]">
          <td className="bg-[#353637] p-0 font-bold text-white">1</td>
          <td className="border-r border-b-2 border-r-[#3a3b3d] border-b-[#808285] p-0 pl-[3px]">阳台栏板</td>
          <td className="border-r-2 border-b-2 border-[#808285] p-0 pl-[5px]">&lt;1+500,A&gt;&lt;10-500,A&gt;</td>
        </tr>
      </tbody>
    </table>
  );
}

function QuantityDialog() {
  return (
    <div role="dialog" aria-label="查看构件图元工程量" className="absolute top-[73px] right-[490px] bottom-9 left-[491px] z-20 flex flex-col rounded-[10px] border border-[#505250] bg-[#434544] px-[15px] pb-2 shadow-[0_0_14px_rgba(0,0,0,0.6)]">
      <div className="flex h-[41px] shrink-0 items-center pt-1 text-[#d2d3d4]">
        <h2 className="text-[18px]">查看构件图元工程量</h2>
        <div className="-mr-1 ml-auto flex items-center gap-5 text-[#a5a6a7]">
          <button aria-label="最小化"><Minus className="mt-2 size-4" strokeWidth={1.5}/></button>
          <button aria-label="最大化"><Square className="size-4" strokeWidth={1.5}/></button>
          <button aria-label="关闭"><X className="size-[18px]" strokeWidth={1.5}/></button>
        </div>
      </div>
      <div className="flex h-[30px] shrink-0 items-end gap-1">
        <button className="h-[30px] w-[91px] rounded-t-md border border-b-0 border-[#38393a] bg-[#525355]">构件工程量</button>
        <button className="h-[26px] w-[90px] rounded-t bg-[#494b4b]">做法工程量</button>
      </div>
      <div className="flex min-h-0 grow flex-col border border-[#38393a] bg-[#525355] pt-[11px]">
        <div className="flex h-[382px] shrink-0 flex-col rounded-t border-y border-[#38393a]">
          <div className="flex h-[29px] shrink-0 items-center gap-2.5 pb-2 pl-2.5">
            <Radio name="kind" label="清单工程量" checked/>
            <Radio name="kind" label="定额工程量"/>
            <CheckBox label="显示房间、组合构件量" checked tone="blue"/>
            <CheckBox label="只显示标准层单层量" checked disabled/>
            <CheckBox label="显示施工段归类" checked tone="blue"/>
          </div>
          <div className="ml-0.5 overflow-hidden">
            <QuantityTable/>
          </div>
          <div className="mt-auto mr-[90px] mb-1 ml-[19px] h-2.5 rounded-full bg-[#68696b]"/>
        </div>
        <div className="mt-[17px] flex grow flex-col rounded-t border-y border-[#38393a]">
          <div className="flex h-[30px] shrink-0 items-center gap-3 border-b border-[#424345] pb-2 pl-px">
            <span>图元明细</span>
            <span>1 (1)</span>
          </div>
          <div className="flex grow items-start pl-0.5">
            <DetailTable/>
          </div>
        </div>
        <div className="flex h-[41px] shrink-0 items-end gap-2 pr-1.5 pl-[7px]">
          <button className="h-8 w-[174px] rounded border border-[#68696b] bg-[#444547]">设置分类及工程量</button>
          <button className="h-8 w-[174px] rounded border border-[#68696b] bg-[#444547]">导出到Excel</button>
          <button className="ml-auto h-8 w-[100px] rounded bg-[#057bcb] text-white">退出</button>
        </div>
      </div>
      <svg viewBox="0 0 12 12" className="absolute right-1 bottom-1 size-3" fill="#77797d" aria-hidden="true">
        <path d="M9 0h2v2H9zM5 4h2v2H5zM9 4h2v2H9zM1 8h2v2H1zM5 8h2v2H5zM9 8h2v2H9z"/>
      </svg>
    </div>
  );
}

/* ---------- status bar ---------- */

function SnapButton({label, width, active, menu, children}: {label: string; width: string; active?: boolean; menu?: boolean; children: ReactNode}) {
  return (
    <button aria-label={label} className={`flex h-[31px] items-center justify-center gap-1.5 rounded border ${width} ${active ? "border-[#2f74c0] bg-[#26303c]" : "border-[#3d3e40] bg-[#232425]"}`}>
      <Icon>{children}</Icon>
      {menu && <Caret className="text-[#77787a]"/>}
    </button>
  );
}

function StatusBar() {
  return (
    <footer className="flex h-[37px] shrink-0 items-center bg-[#2b2d2f] pt-0.5 whitespace-nowrap">
      <span className="w-[329px] pl-[3px] whitespace-pre">X  =  2687654  Y  =  636474</span>
      <span className="w-[106px] pl-0.5">层高： 3.1</span>
      <span className="w-[167px]">标高： -0.08~3.02</span>
      <span className="w-32">1(4)</span>
      <span className="w-[129px]">隐藏：0</span>
      <div className="flex items-center gap-[5px]">
        <SnapButton label="正交" width="w-[30px]"><path d="M4 3v14h14M4 12h5v5"/></SnapButton>
        <SnapButton label="捕捉" width="w-[46px]" active menu><path d="M5 3h11q2 0 2 2v11q0 2-2 2H4q-2 0-2-2V6"/><circle cx="3" cy="3" r="2" fill={BLUE} stroke="none"/></SnapButton>
        <SnapButton label="交点" width="w-[30px]"><path d="M1 1l18 18M19 1L1 19" stroke="#8b8c8e"/></SnapButton>
        <SnapButton label="角度" width="w-[46px]" menu><path d="M16 2L2 18h16"/><circle cx="9" cy="10" r="1.500" fill={GRAY}/></SnapButton>
        <SnapButton label="偏移" width="w-[46px]" menu><path d="M5 1v9M0 5.500h9"/><path d="M8 12h11v6H8z" fill={GRAY}/></SnapButton>
        <SnapButton label="图层" width="w-[30px]"><path d="M4 2h11v12H4z" fill="#b9babc"/><path d="M2 4v13h9M17 4v7"/><path d="M12 9v9l3-2h4z" fill={GRAY} stroke="#232425"/></SnapButton>
        <SnapButton label="折线" width="w-[30px]"><path d="M3 17Q4 7 16 3"/><circle cx="3" cy="17" r="1.500" fill={GRAY}/><circle cx="17" cy="3" r="1.500" fill={GRAY}/><path d="M12 9v9l2-2h4z" fill={GRAY} stroke="none"/></SnapButton>
      </div>
      <span className="ml-[9px]">按鼠标左键指定第一个角点，或拾取构件图元</span>
    </footer>
  );
}

export default function App() {
  return (
    <div className="relative flex h-screen flex-col overflow-hidden bg-[#2d2f31] font-['Noto_Sans','Noto_Sans_CJK_SC',sans-serif] text-[15px] leading-5 text-[#d2d3d4]">
      <header className="relative shrink-0">
        <svg viewBox="0 0 46 46" className="absolute top-0 left-2.5 size-[46px]" aria-hidden="true">
          <defs>
            <linearGradient id="logo" x1="0" y1="0" x2="1" y2="1">
              <stop offset="0" stopColor="#18dcff"/>
              <stop offset="0.500" stopColor="#1a9cff"/>
              <stop offset="1" stopColor="#1450f0"/>
            </linearGradient>
          </defs>
          <path d="M6 5h26q6 0 5 4-1 5-7 5-4 0-5 6l-2 15q-1 5-5 5t-4-5V20q0-6-6-6-7 0-7-5 0-4 5-4z" fill="url(#logo)"/>
          <path d="M44 39v5h-5z" fill="#9a9b9d"/>
        </svg>
        <TitleBar/>
        <MenuBar/>
        <Ribbon/>
        <FilterBar/>
      </header>
      <main className="flex min-h-0 grow bg-[#2d2e30]">
        <div className="flex bg-[#242527]"><NavPanel/></div>
        <div className="w-1.5 shrink-0"/>
        <ComponentPanel/>
        <Canvas/>
        <div className="flex w-[5px] shrink-0 flex-col justify-center">
          <div className="flex h-[125px] items-center bg-[#5d6876]">
            <span className="border-y-4 border-l-4 border-y-transparent border-l-[#d2d3d4]"/>
          </div>
        </div>
        <DisplayPanel/>
      </main>
      <StatusBar/>
      <div className="h-[3px] shrink-0 bg-[#e6e6e6]"/>
      <QuantityDialog/>
    </div>
  );
}
